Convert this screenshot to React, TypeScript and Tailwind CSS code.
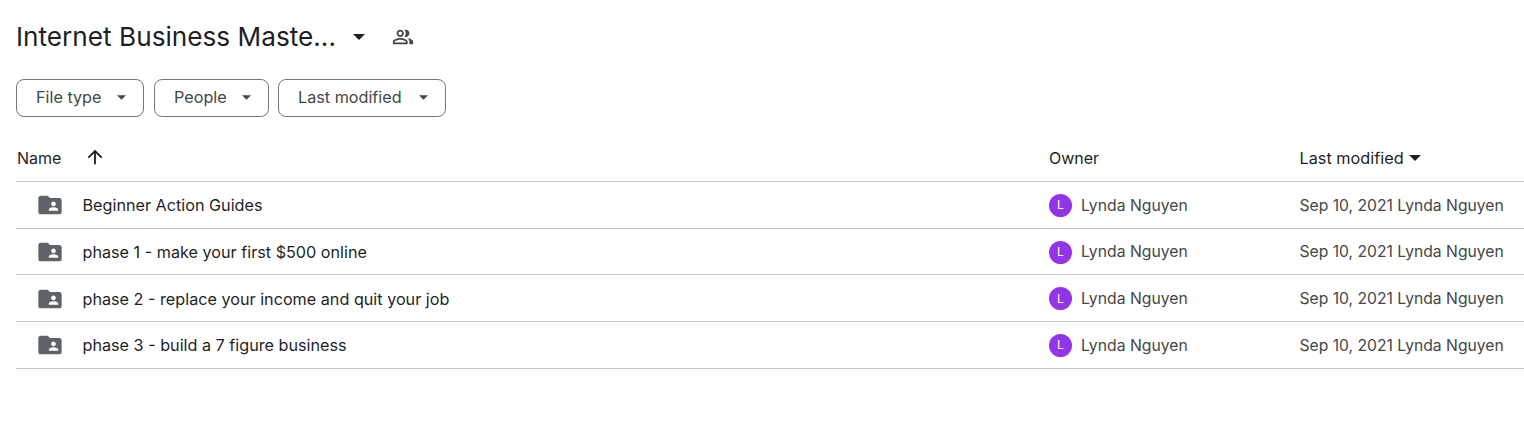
const font = "font-['Inter',sans-serif]";

const rows = [
  'Beginner Action Guides',
  'phase 1 - make your first $500 online',
  'phase 2 - replace your income and quit your job',
  'phase 3 - build a 7 figure business',
];

const filters = [
  { label: 'File type', width: 'w-[128px]' },
  { label: 'People', width: 'w-[115px] -mr-px' },
  { label: 'Last modified', width: 'w-[168px]' },
];

function Caret({ className }: { className: string }) {
  return (
    <svg viewBox="0 0 10 5" className={className} fill="currentColor">
      <path d="M0 0l5 5 5-5z" />
    </svg>
  );
}

function SharedFolder() {
  return (
    <svg viewBox="0 0 24 24" className="w-[28px] h-[28px] text-[#5f6368]" fill="currentColor">
      <path d="M20 6h-8l-2-2H4c-1.1 0-2 .9-2 2v12c0 1.1.9 2 2 2h16c1.1 0 2-.9 2-2V8c0-1.1-.9-2-2-2zm-5 3c1.1 0 2 .9 2 2s-.9 2-2 2-2-.9-2-2 .9-2 2-2zm4 8h-8v-1c0-1.33 2.67-2 4-2s4 .67 4 2v1z" />
    </svg>
  );
}

function People() {
  return (
    <svg viewBox="0 0 24 24" className="w-[22px] h-[22px] text-[#444746]" fill="currentColor">
      <path d="M16.67 13.13C18.04 14.06 19 15.32 19 17v3h4v-3c0-2.18-3.57-3.47-6.33-3.87zM15 12c2.21 0 4-1.79 4-4s-1.79-4-4-4c-.47 0-.91.1-1.33.24C14.5 5.27 15 6.58 15 8s-.5 2.73-1.33 3.76c.42.14.86.24 1.33.24zM9 12c2.21 0 4-1.79 4-4s-1.79-4-4-4-4 1.79-4 4 1.79 4 4 4zm0-6c1.1 0 2 .9 2 2s-.9 2-2 2-2-.9-2-2 .9-2 2-2zM9 13c-2.67 0-8 1.34-8 4v3h16v-3c0-2.66-5.33-4-8-4zm6 5H3v-.99C3.2 16.29 6.3 15 9 15s5.8 1.29 6 2v1z" />
    </svg>
  );
}

export default function App() {
  return (
    <div className={`${font} min-h-screen bg-white pl-4 text-[#1f1f1f]`}>
      {/* Folder title */}
      <div className="flex items-center h-[74px]">
        <h1 className="text-[26.2px] leading-9 w-[319px] whitespace-nowrap">Internet Business Maste...</h1>
        <Caret className="w-[12px] h-[6px] ml-[18px] text-[#1f1f1f]" />
        <div className="ml-[27px]"><People /></div>
      </div>

      {/* Filter chips */}
      <div className="flex gap-[10px] mt-[5px]">
        {filters.map((f) => (
          <button
            key={f.label}
            className={`${f.width} h-[38px] pb-px border border-[#747775] rounded-lg flex items-center justify-between pl-[19px] pr-[17px] text-[16.2px] text-[#444746]`}
          >
            <span>{f.label}</span>
            <Caret className="w-[9px] h-[5px] text-[#444746]" />
          </button>
        ))}
      </div>

      {/* Table header */}
      <div className="flex items-center h-[47px] mt-[18px] pb-px border-b border-[#c7c7c7] text-[16px]">
        <div className="w-[1033px] flex items-center pl-px">
          <span>Name</span>
          <svg viewBox="0 0 24 24" className="w-[22px] h-[22px] ml-[23px] -mt-px" fill="currentColor">
            <path d="M13 20h-2V7.8l-5.6 5.6L4 12l8-8 8 8-1.4 1.4L13 7.8z" />
          </svg>
        </div>
        <div className="w-[250.5px]">Owner</div>
        <div className="flex items-center">
          <span className="text-[16.3px] mt-px">Last modified</span>
          <Caret className="w-[12px] h-[6px] ml-[5px] mt-px" />
        </div>
      </div>

      {/* Rows */}
      {rows.map((name) => (
        <div key={name} className="flex items-center h-[46.7px] pt-px border-b border-[#c7c7c7]">
          <div className="w-[1033px] flex items-center pl-5">
            <SharedFolder />
            <span className="ml-[18.5px] text-[16.2px]">{name}</span>
          </div>
          <div className="w-[250.5px] flex items-center text-[#444746]">
            <div className="w-[23px] h-[23px] rounded-full bg-[#9334e6] text-white text-[12px] flex items-center justify-center">L</div>
            <span className="ml-[9px] text-[15.75px]">Lynda Nguyen</span>
          </div>
          <div className="text-[#444746] text-[15.7px] whitespace-nowrap">Sep 10, 2021 Lynda Nguyen</div>
        </div>
      ))}
    </div>
  );
}
